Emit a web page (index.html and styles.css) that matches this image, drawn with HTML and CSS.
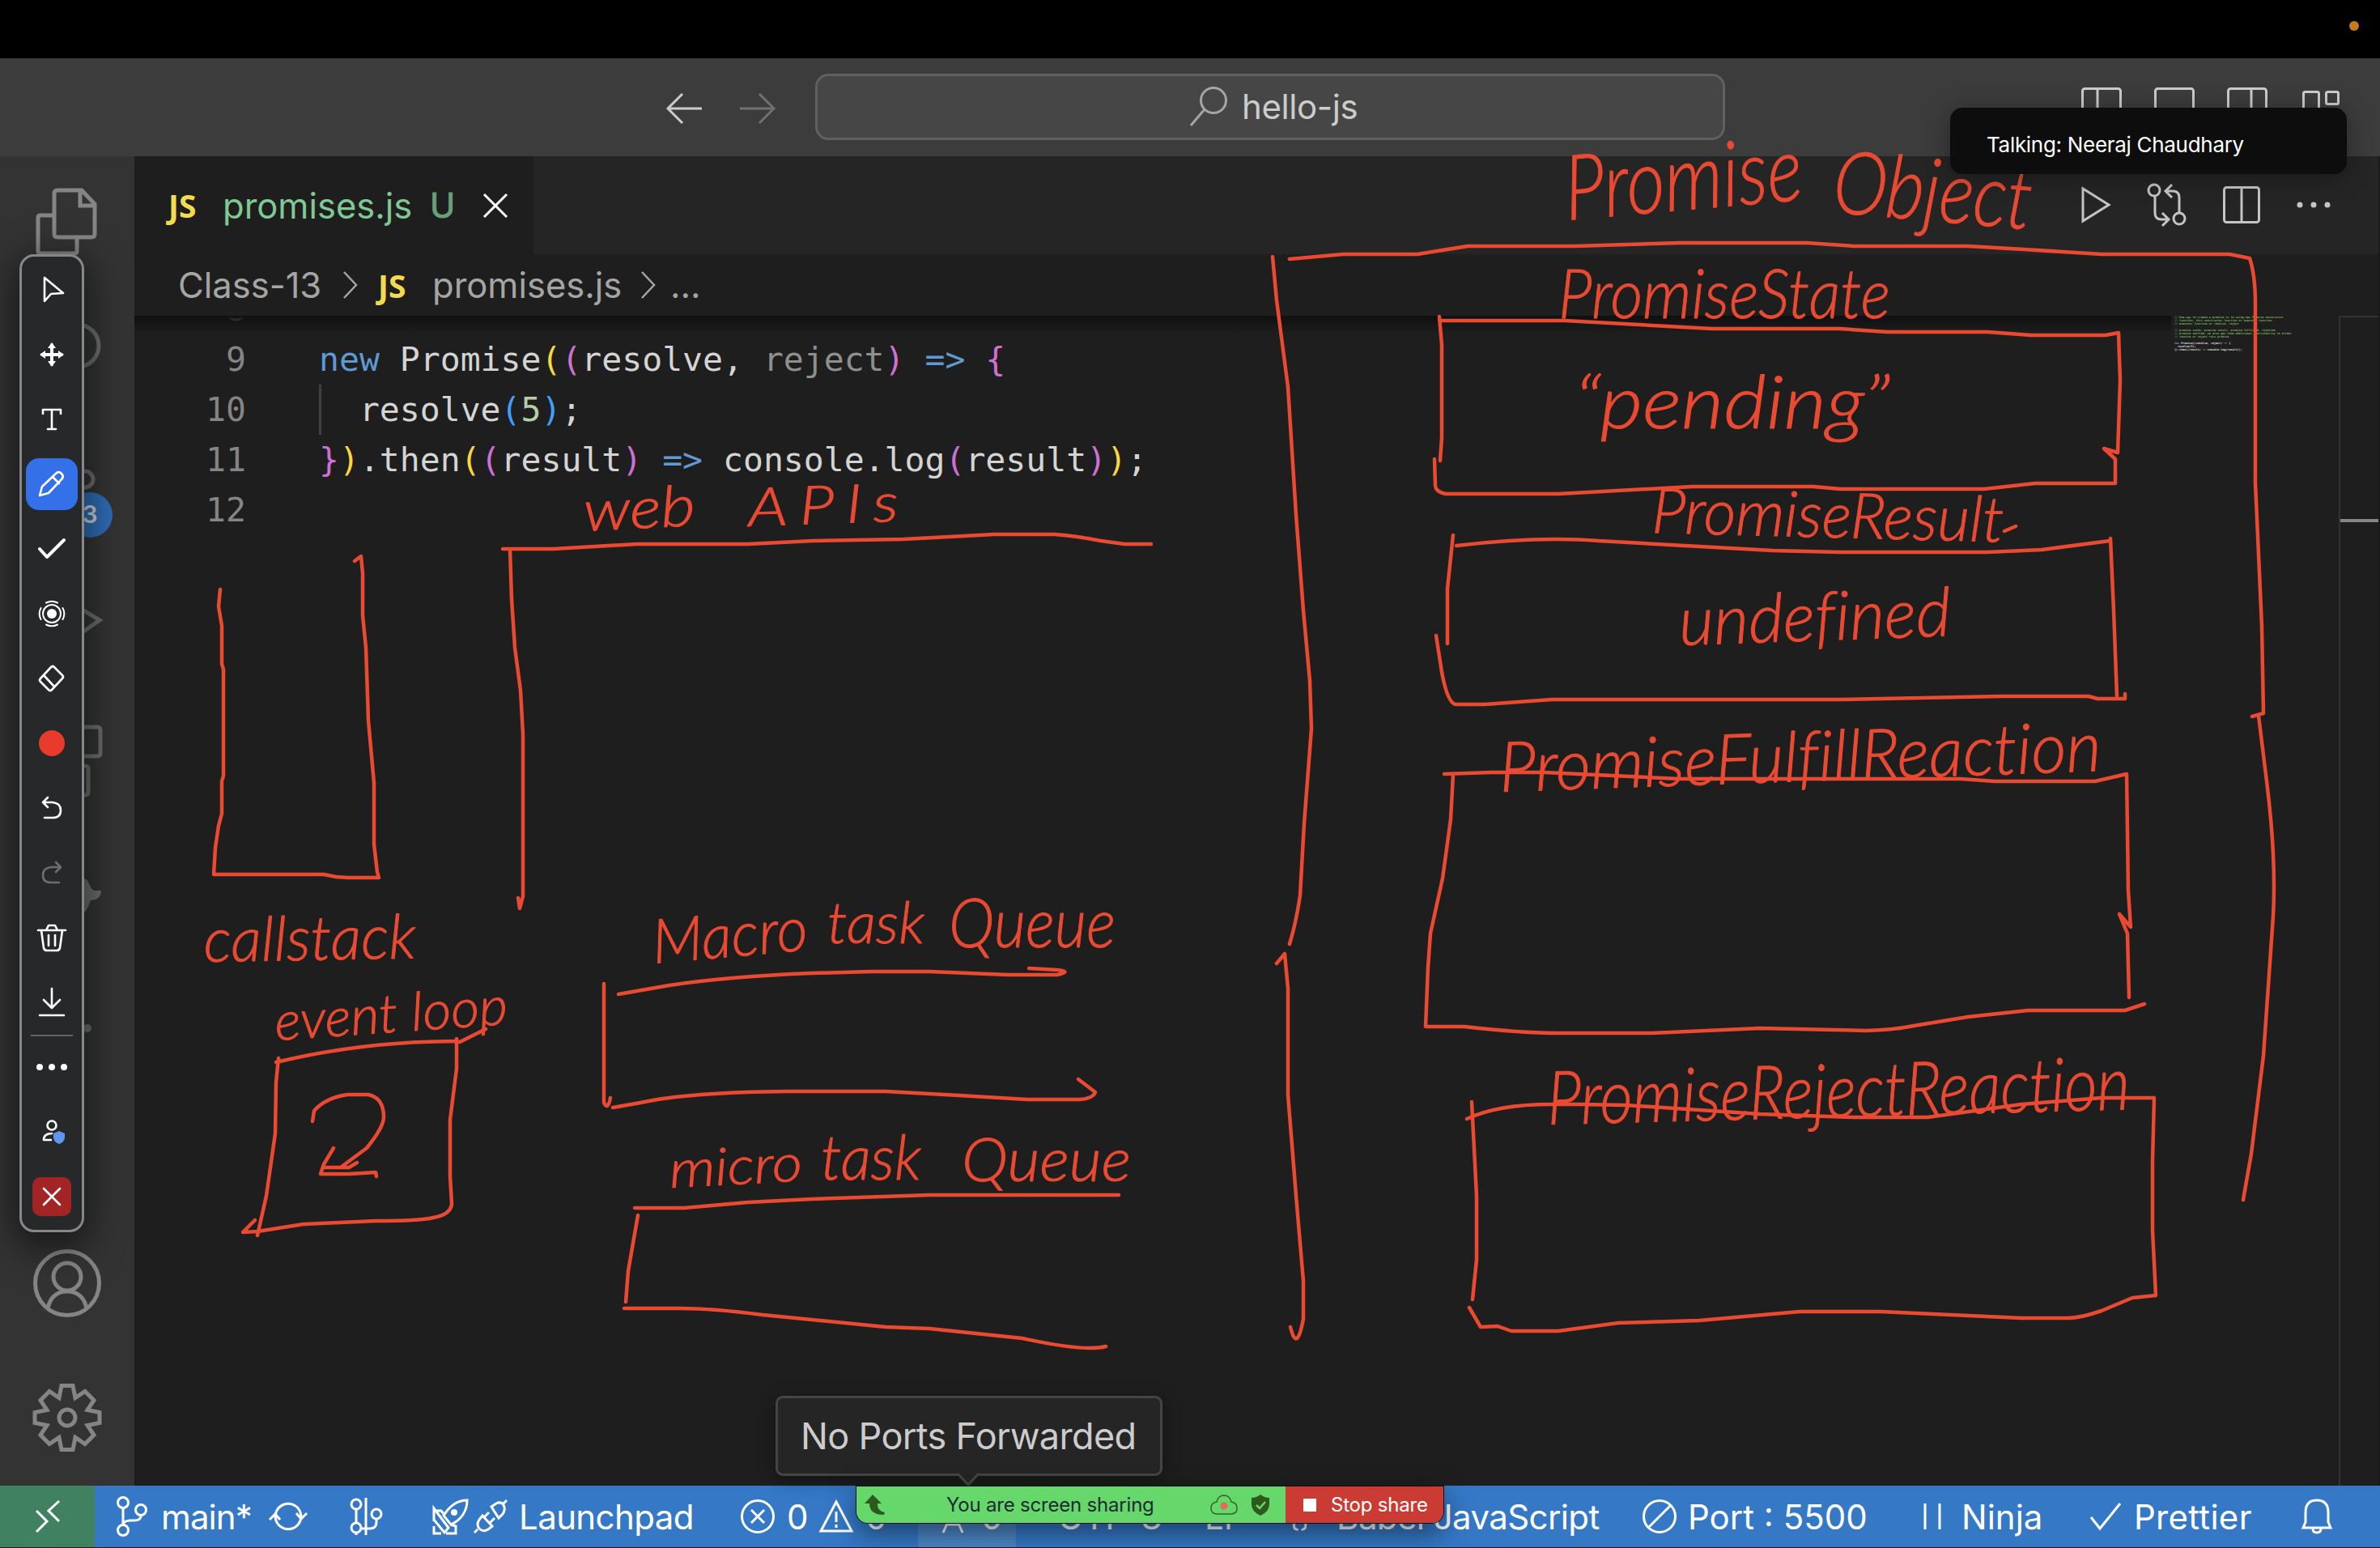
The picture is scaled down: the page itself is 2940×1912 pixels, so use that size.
FILE: index.html
```html
<!DOCTYPE html>
<html lang="en">
<head>
<meta charset="utf-8">
<title>hello-js</title>
<link rel="stylesheet" href="styles.css">
</head>
<body>
<div class="screen">
  <div class="menubar"><span class="mic-dot"></span></div>

  <header class="titlebar">
    <svg class="nav-arrow" width="44" height="38" viewBox="0 0 44 38"><path d="M20 1 2 19l18 18M2 19h42"/></svg>
    <svg class="nav-arrow nav-arrow-off" width="44" height="38" viewBox="0 0 44 38"><path d="M24 1 42 19 24 37M42 19H0"/></svg>
    <div class="command-center">
      <svg class="search-icon" width="46" height="50" viewBox="0 0 46 50"><circle cx="29" cy="17" r="15.5"/><path d="M18 28 1 48"/></svg>
      <span class="fit-hello">hello-js</span>
    </div>
    <div class="layout-icons">
      <svg width="50" height="44" viewBox="0 0 50 44"><rect x="1.5" y="1.5" width="47" height="41" rx="3"/><path d="M20 2v40"/></svg>
      <svg width="50" height="44" viewBox="0 0 50 44"><rect x="1.5" y="1.5" width="47" height="41" rx="3"/><path d="M2 34h46"/></svg>
      <svg width="50" height="44" viewBox="0 0 50 44"><rect x="1.5" y="1.5" width="47" height="41" rx="3"/><path d="M30 2v40"/></svg>
      <svg width="50" height="44" viewBox="0 0 50 44"><rect x="4.500" y="5.500" width="19" height="38" rx="2"/><rect x="32.500" y="5.500" width="15" height="15" rx="2"/><rect x="32.500" y="31" width="15" height="13" rx="2"/></svg>
    </div>
  </header>

  <main class="workbench">
    <nav class="activity">
      <svg class="files" width="74" height="82" viewBox="0 0 74 82"><path d="M23 33H5q-3 0-3 3v41q0 3 3 3h42q3 0 3-3V62M26 2h30l16 17v37q0 4-4 4H26q-4 0-4-4V6q0-4 4-4zM54 2v19h18"/></svg>
      <svg class="hidden-icons" width="100" height="900" viewBox="0 0 100 900"><circle cx="54" cy="36" r="26"/><circle cx="63" cy="201" r="10"/><path d="M40 350l41 25-41 29M50 507h28q4 0 4 4v28q0 4-4 4H50M50 555h13q4 0 4 4v28q0 4-4 4H50"/><path class="solid" d="M62 694c7 2 6 12 12 15h9c0 8-6 12-13 12-3 8-5 14-10 16z"/><circle class="solid" cx="66" cy="879" r="5"/></svg>
      <span class="badge">3</span>
      <div class="activity-bottom">
        <svg width="84" height="84" viewBox="0 0 84 84"><circle cx="42" cy="42" r="39.500"/><circle cx="42" cy="34" r="17"/><path d="M18 73c3-14 12-21 24-21s21 7 24 21"/></svg>
        <svg width="84" height="84" viewBox="0 0 84 84"><path d="M35 2.500h14l3 15 12-8 11 11-8 12 15 3v13l-15 3 8 12-11 11-12-8-3 15H35l-3-15-12 8L9 63.500l8-12-15-3v-13l15-3-8-12 11-11 12 8z"/><circle cx="42" cy="42" r="10"/></svg>
      </div>
    </nav>

    <section class="editor">
      <div class="tabs">
        <div class="tab">
          <span class="js">JS</span><span class="tab-name">promises.js</span><span class="tab-git">U</span>
          <svg class="tab-close" width="30" height="30" viewBox="0 0 30 30"><path d="M1 1l28 28M29 1 1 29"/></svg>
        </div>
        <div class="tab-actions">
          <svg width="38" height="46" viewBox="0 0 38 46"><path d="M3 3v40L35 23z"/></svg>
          <svg width="50" height="54" viewBox="0 0 50 54"><circle cx="9" cy="9" r="7"/><circle cx="40" cy="44" r="7"/><path d="M10 17v20q0 8 8 8h8M19 37l8 8-8 8M40 36V18q0-8-8-8h-8M31 2l-8 8 8 8"/></svg>
          <svg width="46" height="46" viewBox="0 0 46 46"><rect x="1.500" y="1.500" width="43" height="43" rx="3"/><path d="M23 2v42"/></svg>
          <svg width="44" height="10" viewBox="0 0 44 10"><g class="dots"><circle cx="5" cy="5" r="3.500"/><circle cx="22" cy="5" r="3.500"/><circle cx="39" cy="5" r="3.500"/></g></svg>
        </div>
      </div>

      <div class="crumbs">
        <span class="crumb-dir">Class-13</span>
        <svg width="20" height="36" viewBox="0 0 20 36"><path d="M2 2l15 16L2 34"/></svg>
        <span class="js">JS</span>
        <span class="crumb-file">promises.js</span>
        <svg width="20" height="36" viewBox="0 0 20 36"><path d="M2 2l15 16L2 34"/></svg>
        <span class="crumb-more">...</span>
      </div>

      <div class="code-area">
        <div class="lines">
          <div class="row"><span class="ln">8</span></div>
          <div class="row"><span class="ln">9</span><code><b class="kw">new</b> Promise<b class="y">(</b><b class="p">(</b>resolve, <b class="dim">reject</b><b class="p">)</b> <b class="kw">=&gt;</b> <b class="p">{</b></code></div>
          <div class="row"><span class="ln">10</span><code class="guide">  resolve<b class="bl">(</b><b class="num">5</b><b class="bl">)</b>;</code></div>
          <div class="row"><span class="ln">11</span><code><b class="p">}</b><b class="y">)</b>.then<b class="y">(</b><b class="p">(</b>result<b class="p">)</b> <b class="kw">=&gt;</b> console.log<b class="p">(</b>result<b class="p">)</b><b class="y">)</b>;</code></div>
          <div class="row"><span class="ln">12</span></div>
        </div>
        <pre class="minimap"><i>// One way to create a promise is to using new Promise constructor
// function, this constructor function or executor function
// executor function or resolve, reject

// promise state, promise result, promise fulfilled, rejected
// promise settled, we also get some additional functionality to either
// resolve or reject this promise</i>

<b class="kw">new</b> Promise((resolve, reject) <b class="kw">=&gt;</b> {
  resolve(5);
}).then((result) <b class="kw">=&gt;</b> console.log(result));</pre>
        <div class="ruler"><span class="ruler-mark"></span></div>
      </div>
    </section>
  </main>

  <footer class="status">
    <div class="remote"><svg width="32" height="42" viewBox="0 0 32 42"><path d="M2 14l13 13L2 40M30 2 17 14l13 13"/></svg></div>
    <div class="s-branch">
      <svg width="38" height="50" viewBox="0 0 38 50"><circle cx="8" cy="8" r="6.500"/><circle cx="8" cy="42" r="6.500"/><circle cx="30" cy="17" r="6.500"/><path d="M8 15v20M30 24c0 7-8 6-13 6-5 0-9 2-9 6"/></svg>
      <span class="t-main">main*</span>
      <svg width="50" height="40" viewBox="0 0 50 40"><path d="M9 20a16 16 0 0 1 29-9q3 4 3 11M41 20a16 16 0 0 1-29 9q-3-4-3-11M35 16l6 7 7-7M2 24l7-7 6 7"/></svg>
    </div>
    <div class="s-graph"><svg width="42" height="46" viewBox="0 0 42 46"><circle cx="8" cy="8" r="6"/><circle cx="8" cy="37" r="6"/><circle cx="33" cy="20" r="6"/><path d="M8 14v17M20 0v46M8 43v3M33 26v4q0 8-8 8H15"/></svg></div>
    <div class="s-launch">
      <svg width="46" height="44" viewBox="0 0 46 44"><path d="M43 2C32 2 22 8 14 21l9 11C36 26 43 15 43 2zM15 20l-4-5H2v13M22 32l7 2v9H17M2 12l18 24-5 6-13-16zM2 34v9h9"/><circle class="fill" cx="27" cy="17" r="4"/></svg>
      <svg class="plug" width="42" height="42" viewBox="0 0 42 42"><path d="M22 9l6-4q6-3 9 2t-1 11l-5 5zM41 1l-4 4M5 37l-4 4M7 25l4-5 12 13-5 4q-6 4-11-1-4-5 0-11zM13 22l6-6M20 29l6-6"/></svg>
      <span class="t-launch">Launchpad</span>
    </div>
    <div class="s-problems">
      <svg width="42" height="42" viewBox="0 0 42 42"><circle cx="21" cy="21" r="19.500"/><path d="M13 13l16 16M29 13 13 29"/></svg>
      <span>0</span>
      <svg width="42" height="42" viewBox="0 0 42 42"><path d="M21 3 40 39H2zM21 15v13M21 31v4"/></svg>
      <span>0</span>
    </div>
    <div class="s-ports">
      <svg width="30" height="42" viewBox="0 0 30 42"><path d="M15 14 3 41M15 14l12 27M8 31h14"/><circle cx="15" cy="10" r="4"/></svg>
      <span>0</span>
    </div>
    <div class="s-utf">UTF-8</div>
    <div class="s-eol">LF</div>
    <div class="s-lang"><span class="braces">{}</span><span class="t-lang">Babel JavaScript</span></div>
    <div class="s-port"><svg width="42" height="42" viewBox="0 0 42 42"><circle cx="21" cy="21" r="19.500"/><path d="M35 7 7 35"/></svg><span class="t-port">Port : 5500</span></div>
    <div class="s-ninja"><svg width="24" height="32" viewBox="0 0 24 32"><path d="M3 0v32M21 0v32"/></svg><span>Ninja</span></div>
    <div class="s-prettier"><svg width="38" height="34" viewBox="0 0 38 34"><path d="M1 18l11 14L37 1"/></svg><span>Prettier</span></div>
    <div class="s-bell"><svg width="38" height="44" viewBox="0 0 38 44"><path d="M5 29V17Q5 2 19 2t14 15v12l3 7H2zM14 37q0 5 5 5t5-5"/></svg></div>
  </footer>

  <svg class="ink" width="2940" height="1912" viewBox="0 0 2940 1912">
    <!-- call stack -->
    <path d="M272 728 270 749 274 773V820L276 827V958L274 965V1005L270 1020 266 1047 264 1080H400L415 1083 429 1084H468L466 1077 462 1043V967L455 890 452 800 448 760V708L446 687 438 693"/>
    <!-- web apis -->
    <path d="M621 678H683L700 677 786 672H924L1004 668 1116 666 1228 660H1303Q1330 662 1360 668L1389 672H1422"/>
    <path d="M630 679 632 740 636 800 643 853 646 907V1107L642 1122 640 1109"/>
    <!-- event loop -->
    <path d="M341 1312Q450 1286 565 1286"/>
    <path d="M564 1283V1320L556 1383V1453L558 1487Q557 1500 535 1504 520 1508 464 1508L375 1512 318 1521 300 1522 315 1507"/>
    <path d="M344 1307 341 1337 340 1400 329 1477 318 1526M568 1287 600 1271"/>
    <path d="M386 1385 388 1372Q402 1356 429 1352H455Q474 1356 474 1380 474 1392 453 1418L422 1441M400 1442H431L441 1436M412 1418 400 1438 396 1450H431L464 1448 465 1453"/>
    <!-- macro task queue -->
    <path d="M764 1228 827 1217Q900 1206 1003 1202L1076 1200H1148L1245 1204H1306Q1325 1200 1306 1198L1271 1196"/>
    <path d="M746 1215V1362Q751 1372 754 1356M757 1368 791 1362Q850 1349 973 1348H1094L1185 1353 1269 1358H1333Q1350 1357 1353 1349L1332 1333"/>
    <!-- micro task queue -->
    <path d="M784 1492H845L924 1485 1003 1481 1148 1476H1382"/>
    <path d="M788 1501 776 1570 773 1608M771 1616H839Q880 1616 942 1624L1094 1639 1148 1641 1263 1653Q1340 1670 1366 1663"/>
    <!-- promise object -->
    <path d="M1572 317 1577 371 1591 478 1601 636 1610 754 1618 841 1620 900 1611 1017 1606 1106Q1601 1140 1593 1166"/>
    <path d="M1577 1190 1587 1178 1591 1221V1352L1601 1477 1610 1582V1629Q1602 1672 1594 1639"/>
    <path d="M1593 320 1659 314H1751L1813 304H1946L2074 300H2232L2290 304H2431L2500 308 2596 314H2754L2779 319Q2786 340 2786 375V596L2794 774 2796 881 2782 885"/>
    <path d="M2790 884 2800 965Q2812 1060 2808 1132L2796 1304 2781 1425 2771 1482"/>
    <!-- promise state -->
    <path d="M1778 391 1781 426V541L1779 569M1778 396H1933L2115 406H2273L2331 410H2455L2509 414H2601L2617 411 2619 470 2616 559 2599 554 2613 567V597H2514L2451 604H2273L2240 601H2091L1925 610H1786Q1774 608 1773 600L1772 567"/>
    <!-- promise result -->
    <path d="M1795 661 1788 727V795M1774 785 1781 830Q1788 868 1798 870H1834L1917 864H2273L2472 860H2580L2591 863H2625V857"/>
    <path d="M1799 674Q1900 662 1975 668L2190 680 2273 682H2455L2522 679 2606 668M2607 665 2611 754 2615 860M2476 656 2490 650"/>
    <!-- fulfill reactions -->
    <path d="M1784 956 1842 954H1908L2074 962H2422L2464 965H2588L2627 956 2629 1100 2632 1145 2618 1129 2628 1153 2630 1232"/>
    <path d="M1795 957 1792 1012 1782 1085 1767 1153 1764 1195 1761 1268H1809Q1880 1276 1925 1276H2041L2174 1270 2306 1273Q2340 1272 2364 1267L2431 1256 2505 1248H2625L2649 1240"/>
    <!-- reject reactions -->
    <path d="M1812 1382Q1850 1364 1916 1364H1950L2008 1365 2174 1376 2290 1380H2381L2497 1364 2596 1356H2661L2659 1435V1519L2663 1600 2634 1603 2596 1619Q2570 1628 2555 1628H2497L2323 1620H2223L2099 1631 1999 1634 1925 1644H1867L1850 1638 1829 1639 1815 1615"/>
    <path d="M1818 1361 1824 1477V1556L1819 1605"/>
    <g class="hand">
      <text transform="translate(252 1188) rotate(-1)" textLength="262" lengthAdjust="spacingAndGlyphs" font-size="76">callstack</text>
      <text transform="translate(341 1285) rotate(-4)" textLength="288" lengthAdjust="spacingAndGlyphs" font-size="66">event loop</text>
      <text transform="translate(722 656) rotate(-3)" textLength="138" lengthAdjust="spacingAndGlyphs" font-size="70">web</text>
      <text transform="translate(925 650) rotate(-2)" textLength="200" lengthAdjust="spacingAndGlyphs" font-size="66" letter-spacing="12">APIs</text>
      <text transform="translate(808 1190) rotate(-5)" textLength="192" lengthAdjust="spacingAndGlyphs" font-size="76">Macro</text>
      <text transform="translate(1022 1165)" textLength="120" lengthAdjust="spacingAndGlyphs" font-size="72">task</text>
      <text transform="translate(1172 1170)" textLength="206" lengthAdjust="spacingAndGlyphs" font-size="84">Queue</text>
      <text transform="translate(828 1467) rotate(-3)" textLength="164" lengthAdjust="spacingAndGlyphs" font-size="64">micro</text>
      <text transform="translate(1014 1457)" textLength="124" lengthAdjust="spacingAndGlyphs" font-size="76">task</text>
      <text transform="translate(1188 1459)" textLength="209" lengthAdjust="spacingAndGlyphs" font-size="74">Queue</text>
      <text transform="translate(1936 272) rotate(-5)" textLength="294" lengthAdjust="spacingAndGlyphs" font-size="112">Promise</text>
      <text transform="translate(2262 262) rotate(5)" textLength="246" lengthAdjust="spacingAndGlyphs" font-size="108">Object</text>
      <text transform="translate(1925 393)" textLength="410" lengthAdjust="spacingAndGlyphs" font-size="84">PromiseState</text>
      <text transform="translate(1945 529)" textLength="390" lengthAdjust="spacingAndGlyphs" font-size="90">“pending”</text>
      <text transform="translate(2040 658) rotate(1.500)" textLength="435" lengthAdjust="spacingAndGlyphs" font-size="78">PromiseResult</text>
      <text transform="translate(2075 797) rotate(-2)" textLength="336" lengthAdjust="spacingAndGlyphs" font-size="84">undefined</text>
      <text transform="translate(1853 978) rotate(-2)" textLength="744" lengthAdjust="spacingAndGlyphs" font-size="86">PromiseFulfillReaction</text>
      <text transform="translate(1912 1389) rotate(-1.500)" textLength="720" lengthAdjust="spacingAndGlyphs" font-size="92">PromiseRejectReaction</text>
    </g>
  </svg>

  <aside class="toolbar">
    <div><svg width="28" height="36" viewBox="0 0 28 36"><path d="M5 3v29l8-9 15-1z"/></svg></div>
    <div><svg width="32" height="32" viewBox="0 0 32 32"><path d="M16 4v24M4 16h24" stroke-width="4"/><path class="fill" d="M16 1l5 7H11zM16 31l5-7H11zM1 16l7-5v10zM31 16l-7-5v10z"/></svg></div>
    <div><svg width="26" height="28" viewBox="0 0 26 28"><path d="M2 7V2h22v5M13 2v24M8 26h10"/></svg></div>
    <div class="active"><svg width="34" height="34" viewBox="0 0 34 34"><path d="M2 31l3-11L23 3q3-2 6 1t1 6L13 28zM18 8l8 8"/></svg></div>
    <div><svg width="36" height="28" viewBox="0 0 36 28"><path d="M3 14l9 10L33 3" stroke-width="4"/></svg></div>
    <div><svg width="34" height="34" viewBox="0 0 34 34"><circle class="fill" cx="17" cy="17" r="6"/><circle cx="17" cy="17" r="11" stroke-width="2"/><path d="M10 3.500a15 15 0 0 1 14 0M10 30.500a15 15 0 0 0 14 0M3.500 10a15 15 0 0 0 0 14M30.500 10a15 15 0 0 1 0 14" stroke-width="2"/></svg></div>
    <div><svg width="34" height="34" viewBox="0 0 34 34"><path d="M16 3q2-2 4 0l10 10q2 2 0 4L17 31q-2 2-4 0L3 21q-2-2 0-4zM7 13l13 14"/></svg></div>
    <div><span class="swatch"></span></div>
    <div><svg width="28" height="30" viewBox="0 0 28 30"><path d="M9 2 3 8l6 6M3 8h12q10 1 10 10t-10 9H5"/></svg></div>
    <div class="off"><svg width="28" height="30" viewBox="0 0 28 30"><path d="M19 2l6 6-6 6M25 8H13Q3 9 3 18t10 9h10"/></svg></div>
    <div><svg width="36" height="36" viewBox="0 0 36 36"><path d="M1 9h34M11 9l3-6h8l3 6M5 9l3 22q1 3 4 3h12q3 0 4-3l3-22M14 15v13M22 15v13"/></svg></div>
    <div><svg width="34" height="36" viewBox="0 0 34 36"><path d="M17 1v23M7 15l10 10 10-10M2 34h30"/></svg></div>
    <div class="after-rule"><svg width="40" height="10" viewBox="0 0 40 10"><circle class="fill" cx="5" cy="5" r="4"/><circle class="fill" cx="20" cy="5" r="4"/><circle class="fill" cx="35" cy="5" r="4"/></svg></div>
    <div><svg width="26" height="30" viewBox="0 0 26 30"><circle cx="13" cy="7" r="5.500"/><path d="M13 17Q3 17 3 25h9"/><path class="shield" d="M22 14l7 3v5q0 5-7 8-7-3-7-8v-5z"/></svg></div>
    <div class="close"><svg width="24" height="24" viewBox="0 0 24 24"><path d="M2 2l20 20M22 2 2 22"/></svg></div>
  </aside>

  <div class="talking">Talking: Neeraj Chaudhary</div>
  <div class="tooltip">No Ports Forwarded<svg width="28" height="16" viewBox="0 0 28 16"><path d="M1 0 14 14 27 0"/></svg></div>

  <div class="share">
    <div class="share-main">
      <svg width="26" height="26" viewBox="0 0 26 26"><path class="dark" d="M10 0 0 11h6q0 14 18 14l1-3q-10-2-9-11h5z"/></svg>
      <span>You are screen sharing</span>
      <svg width="34" height="26" viewBox="0 0 34 26"><path class="cloud" d="M9 24Q1 24 1 17t7-8q2-8 9-8t9 8q7 1 7 8t-8 7z"/><circle class="rec" cx="17" cy="14" r="4.500"/></svg>
      <svg width="22" height="26" viewBox="0 0 22 26"><path class="dark" d="M11 0q5 4 11 4v8q0 9-11 14Q0 21 0 12V4q6 0 11-4z"/><path class="tick" d="M6 13l4 4 7-8"/></svg>
    </div>
    <div class="share-stop"><i></i>Stop share</div>
  </div>
</div>
</body>
</html>
```
FILE: styles.css
```css
* { box-sizing: border-box; }
body { margin: 0; background: #000; }
svg { display: block; flex: none; fill: none; stroke: currentColor; stroke-width: 3; overflow: visible; }
b, i { font-weight: inherit; font-style: normal; }

.screen {
  position: relative;
  display: flex;
  flex-direction: column;
  width: 2940px;
  height: 1912px;
  overflow: hidden;
  font-family: Inter, "Liberation Sans", sans-serif;
  font-size: 42px;
  color: #ccc;
}

.menubar { flex: none; height: 72px; display: flex; justify-content: flex-end; align-items: flex-start; padding: 26px 26px 0 0; }
.mic-dot { width: 12px; height: 12px; border-radius: 50%; background: #c67b1c; }

.titlebar { flex: none; height: 121px; display: flex; align-items: center; padding-left: 823px; background: #3c3c3c; }
.nav-arrow { color: #ccc; margin-right: 47px; margin-top: 2px; }
.nav-arrow-off { color: #707070; margin-right: 49px; }
.command-center {
  width: 1124px; height: 82px; margin-right: 440px; margin-bottom: 2px;
  display: flex; align-items: center; padding-left: 460px; gap: 18px;
  background: #464646; border: 3px solid #606060; border-radius: 16px;
}
.search-icon { color: #a5a5a5; }
.fit-hello { font-size: 42px; letter-spacing: -0.4px; }
.layout-icons { display: flex; gap: 40px; margin-bottom: 6px; }

.workbench { flex: 1; display: flex; min-height: 0; }
.activity { position: relative; width: 166px; flex: none; background: #333; color: #858585; }
.activity svg { stroke-width: 5; }
.files { margin: 40px 0 0 45px; }
.hidden-icons { position: absolute; left: 42px; top: 198px; }
.hidden-icons .solid { fill: currentColor; stroke: none; }
.hidden-icons circle, .hidden-icons path { color: #6b6b6b; }
.badge {
  position: absolute; left: 83px; top: 415px; width: 56px; height: 56px; border-radius: 50%;
  background: #2e6cb3; color: #c9ccd0; font-size: 30px; font-weight: 600; line-height: 55px; text-align: center;
}
.activity-bottom { position: absolute; left: 41px; bottom: 42px; display: flex; flex-direction: column; gap: 82px; }

.editor { flex: 1; display: flex; flex-direction: column; background: #1e1e1e; min-width: 0; border-right: 2px solid #1a1a1a; }
.tabs { flex: none; height: 121px; display: flex; justify-content: space-between; background: #252526; }
.tab { width: 493px; display: flex; align-items: center; padding-left: 41px; background: #1e1e1e; color: #7fc994; }
.js { width: 42px; font-family: "Open Sans", sans-serif; font-weight: 700; font-size: 39px; color: #f0dc4e; text-indent: 1px; }
.tab-name { width: 231px; margin-left: 26px; font-size: 43.5px; white-space: nowrap; }
.tab-git { width: 66px; margin-left: 25px; color: #6a9f7a; -webkit-text-stroke: 1px; }
.tab-close { color: #fff; }
.tab-actions { display: flex; align-items: center; color: #c5c5c5; padding-right: 58px; padding-bottom: 2px; }
.tab-actions svg + svg { margin-left: 44px; }
.dots { fill: currentColor; stroke: none; }

.crumbs { flex: none; height: 76px; display: flex; align-items: center; padding-left: 54px; color: #a5a5a5; font-size: 43.5px; white-space: nowrap; }
.crumb-dir { width: 203px; }
.crumbs svg { stroke-width: 2.5; }
.crumbs .js { margin-left: 23px; }
.crumb-file { width: 257px; margin-left: 26px; }
.crumb-more { margin-left: 17px; }

.code-area { position: relative; flex: 1; display: flex; min-height: 0; overflow: hidden; }
.code-area::before { content: ""; position: absolute; left: 0; right: 256px; top: 0; height: 22px; background: linear-gradient(#0f0f0f, #1e1e1e00); }
.lines { width: 2520px; margin-top: -39px; font: 41.45px/62px "DejaVu Sans Mono", monospace; color: #d4d4d4; }
.row { display: flex; height: 62px; white-space: pre; }
.ln { width: 138px; margin-right: 90px; text-align: right; color: #858585; }
code { font: inherit; }
.guide { box-shadow: inset 3px 0 #404040; }
.kw { color: #5f9ad3; }
.y { color: #fbd643; }
.p { color: #cf70d3; }
.bl { color: #419ffa; }
.num { color: #b5cea8; }
.dim { color: #8f8f8f; }
.minimap { width: 203px; margin: 0; font: bold 3.4px/4px "DejaVu Sans Mono", monospace; color: #e0e0e0; }
.minimap i { color: #7db560; }
.ruler { flex: 1; border-left: 2px solid #333; border-top: 2px solid #333; }
.ruler-mark { display: block; height: 4px; margin-top: 249px; background: #858585; }

.status { flex: none; height: 77px; display: flex; align-items: stretch; background: #3478c6; border-bottom: 1px solid #1a1a1a; color: #fff; }
.status > div { display: flex; align-items: center; flex: none; white-space: nowrap; }
.remote { width: 117px; margin-right: 27px; padding-left: 43px; background: #3f8160; }
.s-branch { width: 288px; }
.t-main { width: 132px; margin-left: 17px; letter-spacing: -0.9px; }
.s-graph { width: 102px; }
.s-launch { width: 381px; }
.plug { margin-left: 5px; }
.t-launch { margin-left: 14px; letter-spacing: -0.6px; }
.s-problems { width: 219px; }
.s-problems span { width: 40px; margin-left: 15px; }
.s-ports { width: 121px; margin-right: 52px; padding-left: 28px; background: #4c87c9; }
.s-ports span { margin-left: 20px; }
.s-utf { width: 181px; }
.s-eol { width: 103px; }
.s-lang { width: 438px; }
.t-lang { letter-spacing: -0.6px; }
.braces { width: 60px; font-size: 34px; }
.s-port { width: 346px; }
.t-port { margin-left: 14px; }
.s-ninja { width: 207px; }
.s-ninja span { margin-left: 24px; }
.s-prettier { width: 261px; }
.s-prettier span { margin-left: 16px; letter-spacing: 0.3px; }
.status .fill { fill: #fff; stroke: none; }

.ink { position: absolute; left: 0; top: 0; color: #ea4a32; stroke-width: 4.5; stroke-linecap: round; stroke-linejoin: round; }
.hand { fill: #ea4a32; stroke-width: 1; font-family: Lato, sans-serif; font-weight: 300; font-style: italic; font-variant-ligatures: none; }

.toolbar {
  position: absolute; left: 24px; top: 314px; width: 80px; height: 1208px;
  border: 3px solid #85878a; border-radius: 18px; background: #26282a; color: #fff;
  box-shadow: 0 12px 44px 8px rgba(0, 0, 0, .5);
  padding-top: 1px;
}
.toolbar > div { height: 80px; display: flex; align-items: center; justify-content: center; }
.toolbar svg { stroke-width: 2.6; stroke-linecap: round; stroke-linejoin: round; }
.toolbar .fill { fill: #fff; stroke: none; }
.toolbar .shield { fill: #5f97f0; stroke: none; }
.toolbar .active { margin: 8px auto; width: 64px; height: 64px; border-radius: 16px; background: #3471e8; }
.toolbar .off { color: #6c6e70; }
.toolbar .close { margin: 16px auto; width: 48px; height: 48px; border-radius: 10px; background: #a32424; }
.toolbar .after-rule { background: linear-gradient(#606265, #606265) center top / 52px 2px no-repeat; }
.swatch { width: 32px; height: 32px; border-radius: 50%; background: #e93b2c; }

.talking {
  position: absolute; left: 2409px; top: 133px; width: 490px; height: 82px; padding: 29px 0 0 45px;
  border-radius: 15px; background: #0d0d0d; color: #fff; font-size: 26px; line-height: 34px; letter-spacing: -0.3px;
  box-shadow: 0 4px 30px rgba(0, 0, 0, .35);
}
.tooltip {
  position: absolute; left: 958px; top: 1724px; width: 478px; height: 99px; padding-left: 28px;
  border: 3px solid #454545; border-radius: 9px; background: #252526; font-size: 45px; line-height: 94px; letter-spacing: -0.65px; white-space: nowrap;
  box-shadow: 0 4px 22px rgba(0, 0, 0, .4);
}
.tooltip svg { position: absolute; left: 221px; top: 93px; fill: #252526; color: #454545; }
.share {
  position: absolute; left: 1058px; top: 1836px; width: 725px; height: 45px; display: flex;
  border-radius: 0 0 14px 14px; overflow: hidden; font-size: 24px; box-shadow: 0 0 0 1px #111, 0 12px 34px rgba(0, 0, 0, .5);
}
.share-main { width: 530px; display: flex; align-items: center; padding-left: 10px; background: #66d76a; color: #1d2b33; }
.share-main span { width: 326px; margin-left: 75px; letter-spacing: -0.2px; }
.share-main svg + svg { margin-left: 17px; }
.dark { fill: #2d5a1c; stroke: none; }
.cloud { stroke: #2d6a22; stroke-width: 1.5; }
.rec { fill: #e9695c; stroke: none; }
.tick { stroke: #66d76a; stroke-width: 2.5; }
.share-stop { flex: 1; display: flex; align-items: center; gap: 18px; padding-left: 22px; background: #ca3b33; color: #fff; letter-spacing: -0.2px; }
.share-stop i { width: 16px; height: 16px; background: #fff; }
```
